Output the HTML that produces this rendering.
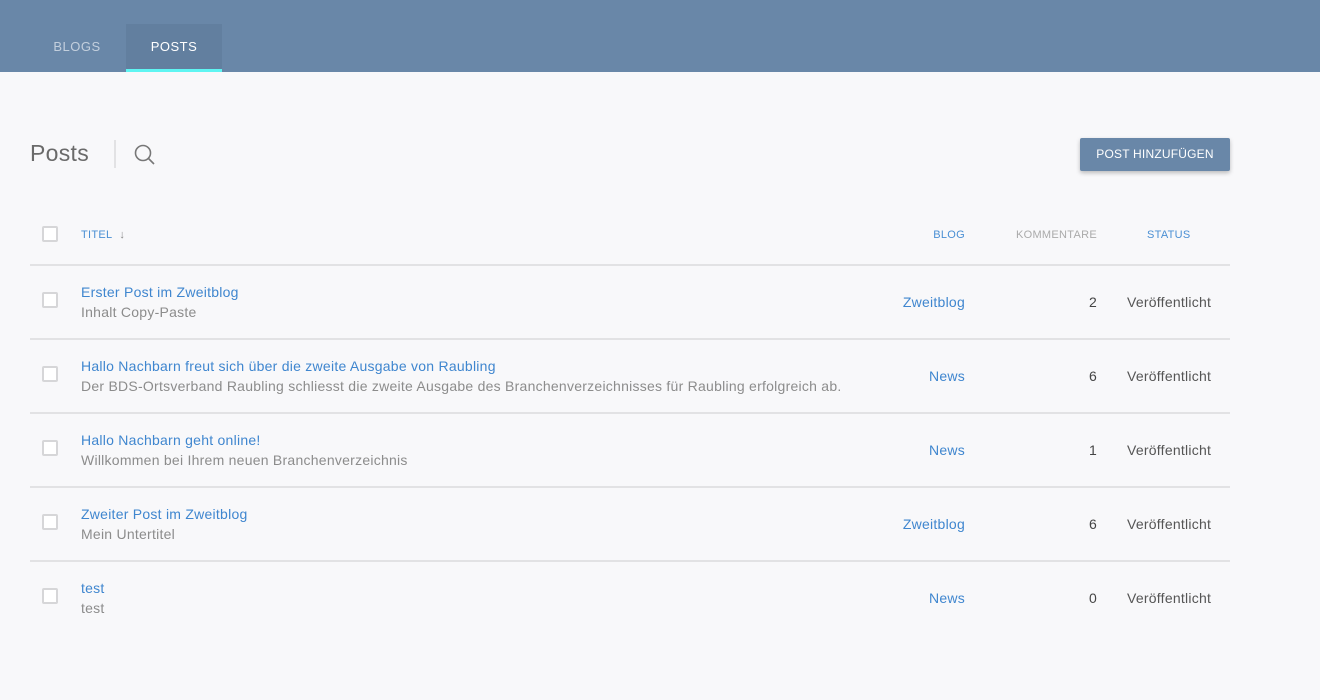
<!DOCTYPE html>
<html><head><meta charset="utf-8"><style>
*{margin:0;padding:0;box-sizing:border-box}
body{width:1320px;height:700px;background:#f8f8fa;font-family:"Liberation Sans",sans-serif;position:relative;overflow:hidden}
.hdr{position:absolute;left:0;top:0;width:1320px;height:72px;background:#6987a8}
.tab{position:absolute;top:24px;height:48px;font-size:13px;line-height:46px;text-align:center;letter-spacing:.5px}
.t1{left:30px;width:94px;color:#c3cfdd}
.t2{left:126px;width:96px;color:#fff;background:#627f9f;border-bottom:3px solid #5ff5f2}
.abs{position:absolute}
.cb{position:absolute;left:42px;width:16px;height:16px;border:2px solid #d6d6d8;border-radius:2px;background:#fff}
.line{position:absolute;left:30px;width:1200px;height:2px;background:#e2e2e4}
.th{position:absolute;top:229px;font-size:11px;color:#4a8fd4;letter-spacing:.3px}
.ti,.su,.bl,.km,.st{position:absolute;font-size:14px;letter-spacing:.25px}
.ti{left:81px;color:#3f86cf}
.su{left:81px;color:#8c8c8c}
.bl{right:355px;color:#3f86cf}
.km{right:223px;color:#444}
.st{left:1127px;color:#555}
</style></head><body>
<div class="hdr"></div>
<div class="tab t1">BLOGS</div>
<div class="tab t2">POSTS</div>
<div class="abs" style="left:30px;top:140px;font-size:23px;color:#6a6a6a;letter-spacing:.3px">Posts</div>
<div class="abs" style="left:114px;top:140px;width:2px;height:28px;background:#e2e2e4"></div>
<svg class="abs" style="left:133px;top:143px" width="24" height="24" viewBox="0 0 24 24"><circle cx="10" cy="10" r="7.5" fill="none" stroke="#777" stroke-width="1.6"/><line x1="15.5" y1="15.5" x2="21" y2="21" stroke="#777" stroke-width="1.6"/></svg>
<div class="abs" style="left:1080px;top:138px;width:150px;height:33px;background:#6987a8;color:#fff;font-size:12px;line-height:33px;text-align:center;border-radius:2px;box-shadow:0 2px 4px rgba(0,0,0,.25);letter-spacing:.2px">POST HINZUFÜGEN</div>
<div class="cb" style="top:226px"></div>
<div class="th" style="left:81px">TITEL <span style="color:#888;margin-left:4px">↓</span></div>
<div class="th" style="right:355px">BLOG</div>
<div class="th" style="right:223px;color:#aaa">KOMMENTARE</div>
<div class="th" style="left:1147px">STATUS</div>
<div class="line" style="top:264px"></div>

<div class="cb" style="top:292px"></div>
<div class="ti" style="top:284px">Erster Post im Zweitblog</div>
<div class="su" style="top:304px">Inhalt Copy-Paste</div>
<div class="bl" style="top:294px">Zweitblog</div><div class="km" style="top:294px">2</div><div class="st" style="top:294px">Veröffentlicht</div>
<div class="line" style="top:338px"></div>

<div class="cb" style="top:366px"></div>
<div class="ti" style="top:358px">Hallo Nachbarn freut sich über die zweite Ausgabe von Raubling</div>
<div class="su" style="top:378px">Der BDS-Ortsverband Raubling schliesst die zweite Ausgabe des Branchenverzeichnisses für Raubling erfolgreich ab.</div>
<div class="bl" style="top:368px">News</div><div class="km" style="top:368px">6</div><div class="st" style="top:368px">Veröffentlicht</div>
<div class="line" style="top:412px"></div>

<div class="cb" style="top:440px"></div>
<div class="ti" style="top:432px">Hallo Nachbarn geht online!</div>
<div class="su" style="top:452px">Willkommen bei Ihrem neuen Branchenverzeichnis</div>
<div class="bl" style="top:442px">News</div><div class="km" style="top:442px">1</div><div class="st" style="top:442px">Veröffentlicht</div>
<div class="line" style="top:486px"></div>

<div class="cb" style="top:514px"></div>
<div class="ti" style="top:506px">Zweiter Post im Zweitblog</div>
<div class="su" style="top:526px">Mein Untertitel</div>
<div class="bl" style="top:516px">Zweitblog</div><div class="km" style="top:516px">6</div><div class="st" style="top:516px">Veröffentlicht</div>
<div class="line" style="top:560px"></div>

<div class="cb" style="top:588px"></div>
<div class="ti" style="top:580px">test</div>
<div class="su" style="top:600px">test</div>
<div class="bl" style="top:590px">News</div><div class="km" style="top:590px">0</div><div class="st" style="top:590px">Veröffentlicht</div>
</body></html>
